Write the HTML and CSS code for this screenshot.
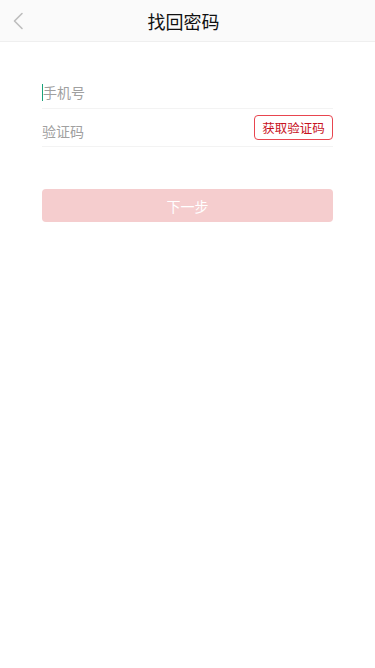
FILE: index.html
```html
<!DOCTYPE html>
<html lang="zh">
<head>
<meta charset="utf-8">
<meta name="viewport" content="width=device-width, initial-scale=1">
<title>找回密码</title>
<link rel="stylesheet" href="styles.css">
</head>
<body>
<header class="nav">
  <span class="back">
    <svg width="12" height="18" viewBox="0 0 12 18"><polyline points="10,1.5 2.5,9 10,16.5" fill="none" stroke="#bdbdbd" stroke-width="1.6" stroke-linecap="round" stroke-linejoin="round"/></svg>
  </span>
  <h1 class="title">找回密码</h1>
</header>
<main class="form">
  <div class="row">
    <span class="caret"></span><span class="placeholder">手机号</span>
  </div>
  <div class="row">
    <span class="placeholder">验证码</span>
    <button class="code-btn">获取验证码</button>
  </div>
  <button class="next">下一步</button>
</main>
</body>
</html>
```

FILE: styles.css
```css
* { box-sizing: border-box; }
html, body { margin: 0; padding: 0; background: #fff; }
body {
  font-family: "Noto Sans CJK SC", "Noto Sans", sans-serif;
  width: 375px;
  height: 668px;
}
.nav {
  height: 42px;
  background: #fafafa;
  border-bottom: 1px solid #efefef;
  display: flex;
  align-items: center;
  justify-content: center;
  position: relative;
}
.back {
  position: absolute;
  left: 12px;
  top: 12px;
  width: 12px;
  height: 18px;
  display: flex;
}
.title {
  margin: 0 8px 0 0;
  font-size: 18px;
  font-weight: normal;
  color: #111;
  line-height: 24px;
}
.form {
  padding: 29px 42px 0;
}
.row {
  height: 38px;
  border-bottom: 1px solid #f3f3f3;
  display: flex;
  align-items: center;
  padding-top: 5px;
}
.row + .row { padding-top: 0; }
.row + .row .placeholder { padding-top: 6px; }
.placeholder {
  font-size: 14px;
  color: #a0a0a0;
  line-height: 20px;
  flex: 1;
}
.caret {
  width: 1px;
  height: 17px;
  background: #1aa27a;
  margin-right: 0;
}
.code-btn {
  width: 79px;
  height: 25px;
  border: 1px solid #e8454f;
  border-radius: 4px;
  background: #fff;
  color: #c8121e;
  font-family: inherit;
  font-size: 12.5px;
  padding: 0;
  line-height: 23px;
}
.next {
  display: block;
  width: 100%;
  height: 33px;
  margin-top: 42px;
  border: none;
  border-radius: 4px;
  background: #f5cdce;
  color: #fff;
  font-family: inherit;
  font-size: 14px;
  padding: 0;
}
```
